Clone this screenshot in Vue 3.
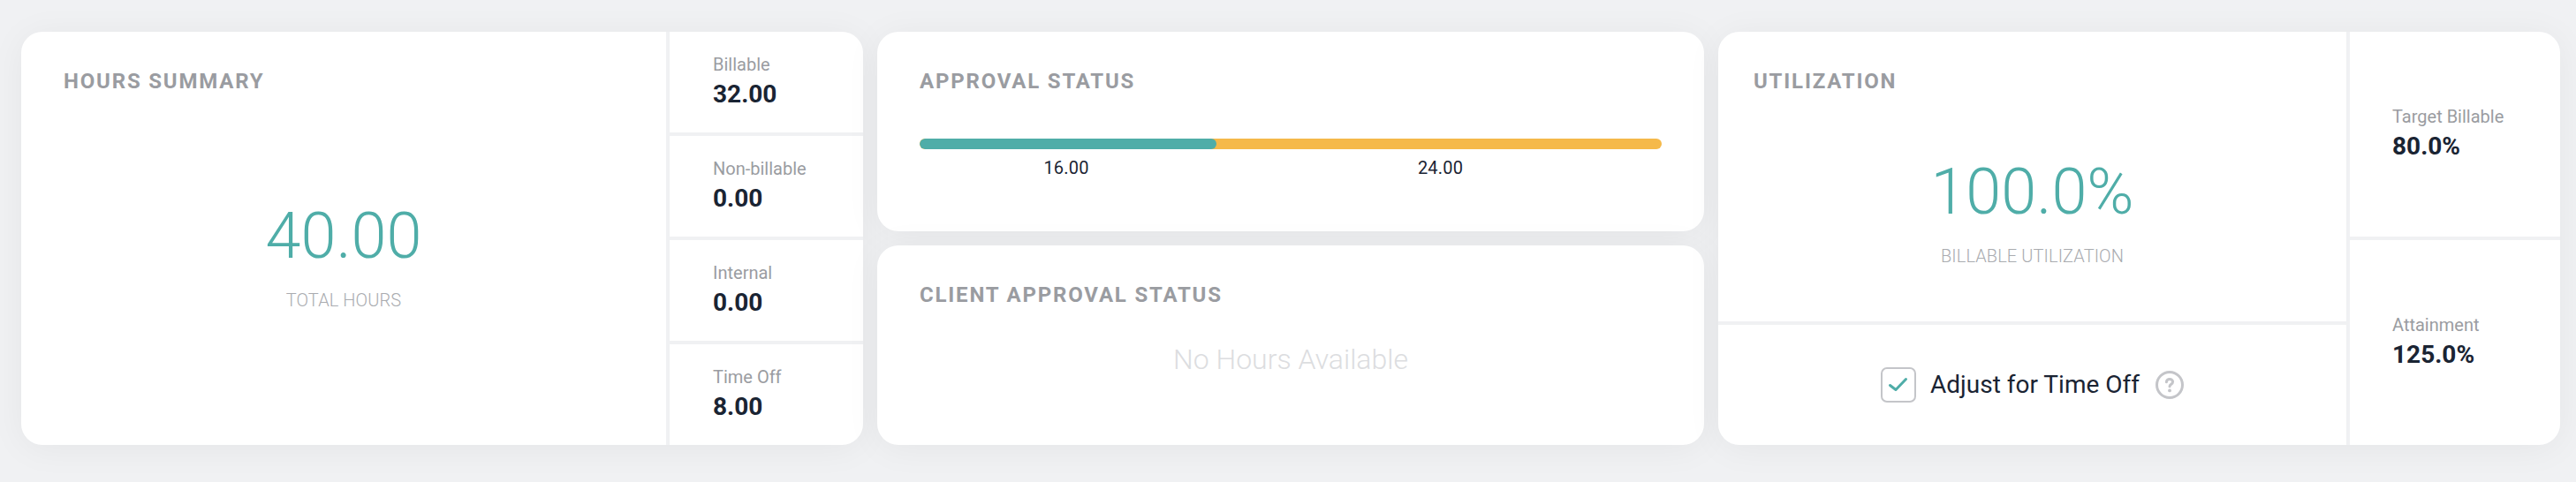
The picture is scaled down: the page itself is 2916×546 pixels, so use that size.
<script setup>
import { computed } from 'vue'

const hours = [
  { label: 'Billable', value: '32.00' },
  { label: 'Non-billable', value: '0.00' },
  { label: 'Internal', value: '0.00' },
  { label: 'Time Off', value: '8.00' },
]

const utilization = [
  { label: 'Target Billable', value: '80.0%' },
  { label: 'Attainment', value: '125.0%' },
]

const approved = 16
const pending = 24
const approvedWidth = computed(() => `${(approved / (approved + pending)) * 100}%`)
</script>

<template>
  <div class="dashboard">
    <section class="card split">
      <div class="main pane">
        <h2 class="title">Hours Summary</h2>
        <div class="metric metric-hours">
          <div class="metric-value">40.00</div>
          <div class="metric-label">Total Hours</div>
        </div>
      </div>
      <div class="side">
        <div v-for="item in hours" :key="item.label" class="stat">
          <div class="stat-label">{{ item.label }}</div>
          <div class="stat-value">{{ item.value }}</div>
        </div>
      </div>
    </section>

    <div class="middle">
      <section class="card pane">
        <h2 class="title">Approval Status</h2>
        <div class="bar">
          <div class="bar-fill" :style="{ width: approvedWidth }"></div>
        </div>
        <div class="bar-labels">
          <span class="bar-label first" :style="{ width: approvedWidth }">16.00</span>
          <span class="bar-label rest">24.00</span>
        </div>
      </section>
      <section class="card pane">
        <h2 class="title">Client Approval Status</h2>
        <div class="empty">No Hours Available</div>
      </section>
    </div>

    <section class="card split">
      <div class="main stack">
        <div class="pane util-pane">
          <h2 class="title">Utilization</h2>
          <div class="metric metric-util">
            <div class="metric-value">100.0%</div>
            <div class="metric-label">Billable Utilization</div>
          </div>
        </div>
        <div class="adjust">
          <span class="checkbox">
            <svg width="24" height="24" viewBox="0 0 24 24" fill="none">
              <path d="M2.5 12.5L9 17.5L20.5 5.5" stroke="#4fada8" stroke-width="3" stroke-linecap="round" stroke-linejoin="round" />
            </svg>
          </span>
          <span class="adjust-text">Adjust for Time Off</span>
          <svg class="help" width="32" height="32" viewBox="0 0 32 32" fill="none">
            <circle cx="16" cy="16" r="14.5" stroke="#c4c5c9" stroke-width="3" />
            <path d="M12.4 12.8c0-2 1.6-3.4 3.6-3.4s3.6 1.3 3.6 3.1c0 2.6-3.6 2.8-3.6 5.2" stroke="#c4c5c9" stroke-width="3" stroke-linecap="round" />
            <circle cx="16" cy="22.4" r="1.9" fill="#c4c5c9" />
          </svg>
        </div>
      </div>
      <div class="side">
        <div v-for="item in utilization" :key="item.label" class="stat">
          <div class="stat-label">{{ item.label }}</div>
          <div class="stat-value">{{ item.value }}</div>
        </div>
      </div>
    </section>
  </div>
</template>

<style>
html,
body {
  background: #f0f1f3;
}
</style>

<style scoped>
.dashboard {
  display: grid;
  grid-template-columns: 953px 936px 953px;
  gap: 16px;
  height: 546px;
  box-sizing: border-box;
  padding: 36px 18px 42px 24px;
  font-family: Roboto, sans-serif;
  color: #1a2433;
}

.card {
  background: #fff;
  border-radius: 24px;
  overflow: hidden;
  box-shadow: 0 4px 40px rgba(0, 0, 0, 0.05);
}

.split {
  display: flex;
  gap: 4px;
  background: #f0f1f3;
}

.main {
  flex: 1;
  min-width: 0;
  background: #fff;
}

.pane {
  padding: 42px 48px 0;
  background: #fff;
}

.title {
  margin: 0;
  font-size: 24px;
  line-height: 28px;
  font-weight: 700;
  letter-spacing: 1.8px;
  text-transform: uppercase;
  color: #9a9ca1;
}

.metric {
  text-align: center;
}

.metric-hours {
  padding-top: 120px;
}

.metric-util {
  padding-top: 70px;
}

.metric-value {
  font-size: 72px;
  line-height: 84px;
  font-weight: 300;
  color: #4fada8;
}

.metric-label {
  margin-top: 18px;
  font-size: 20px;
  line-height: 24px;
  font-weight: 300;
  letter-spacing: 0.1px;
  text-transform: uppercase;
  color: #a9abaf;
}

.side {
  flex: none;
  display: flex;
  flex-direction: column;
  gap: 4px;
}

.split:first-child .side {
  width: 219px;
}

.split:last-child .side {
  width: 238px;
}

.stat {
  flex: 1;
  display: flex;
  flex-direction: column;
  justify-content: center;
  padding: 0 0 2px 48px;
  background: #fff;
}

.split:first-child .stat {
  padding-left: 49px;
}

.stat-label {
  font-size: 20px;
  line-height: 24px;
  font-weight: 400;
  color: #9a9ca1;
}

.stat-value {
  margin-top: 6px;
  font-size: 28px;
  line-height: 32px;
  font-weight: 700;
}

.middle {
  display: grid;
  grid-template-rows: 1fr 1fr;
  gap: 16px;
}

.bar {
  margin-top: 51px;
  height: 12px;
  border-radius: 6px;
  background: #f5b94a;
  overflow: hidden;
}

.bar-fill {
  height: 100%;
  border-radius: 6px;
  background: #4fada8;
}

.bar-labels {
  display: flex;
  margin-top: 9px;
}

.bar-label {
  box-sizing: border-box;
  font-size: 20px;
  line-height: 24px;
  letter-spacing: 0.2px;
  text-align: center;
}

.first {
  padding-right: 4px;
}

.rest {
  flex: 1;
  padding-left: 3px;
}

.empty {
  margin-top: 39px;
  font-size: 32px;
  line-height: 40px;
  font-weight: 300;
  text-align: center;
  color: #dcdde0;
}

.stack {
  display: flex;
  flex-direction: column;
  gap: 4px;
  background: #f0f1f3;
}

.util-pane {
  flex: 1;
  padding-left: 40px;
  padding-right: 40px;
}

.adjust {
  flex: none;
  height: 136px;
  display: flex;
  align-items: center;
  justify-content: center;
  background: #fff;
}

.checkbox {
  box-sizing: border-box;
  width: 40px;
  height: 40px;
  display: flex;
  align-items: center;
  justify-content: center;
  border: 2px solid #c4c5c9;
  border-radius: 7px;
}

.adjust-text {
  margin-left: 16px;
  font-size: 28px;
  line-height: 32px;
}

.help {
  margin-left: 18px;
}
</style>
